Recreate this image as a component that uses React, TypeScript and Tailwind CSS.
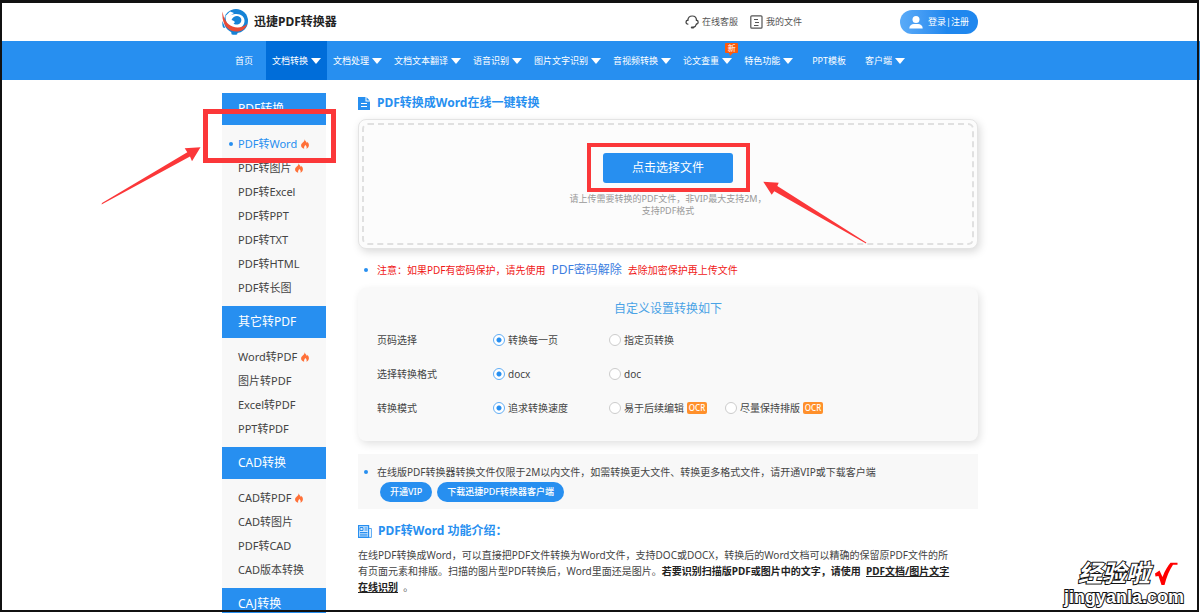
import type { ReactNode } from 'react'

interface NavItem {
  label: string
  menu?: boolean
  active?: boolean
  isNew?: boolean
}

interface SideItem {
  label: string
  hot?: boolean
  active?: boolean
}

interface SideGroup {
  title: string
  items: SideItem[]
}

interface Option {
  label: string
  ocr?: boolean
}

interface SettingRow {
  name: string
  label: string
  options: Option[]
}

const NAV: NavItem[] = [
  { label: '首页' },
  { label: '文档转换', menu: true, active: true },
  { label: '文档处理', menu: true },
  { label: '文档文本翻译', menu: true },
  { label: '语音识别', menu: true },
  { label: '图片文字识别', menu: true },
  { label: '音视频转换', menu: true },
  { label: '论文查重', menu: true, isNew: true },
  { label: '特色功能', menu: true },
  { label: 'PPT模板' },
  { label: '客户端', menu: true },
]

const GROUPS: SideGroup[] = [
  {
    title: 'PDF转换',
    items: [
      { label: 'PDF转Word', hot: true, active: true },
      { label: 'PDF转图片', hot: true },
      { label: 'PDF转Excel' },
      { label: 'PDF转PPT' },
      { label: 'PDF转TXT' },
      { label: 'PDF转HTML' },
      { label: 'PDF转长图' },
    ],
  },
  {
    title: '其它转PDF',
    items: [
      { label: 'Word转PDF', hot: true },
      { label: '图片转PDF' },
      { label: 'Excel转PDF' },
      { label: 'PPT转PDF' },
    ],
  },
  {
    title: 'CAD转换',
    items: [
      { label: 'CAD转PDF', hot: true },
      { label: 'CAD转图片' },
      { label: 'PDF转CAD' },
      { label: 'CAD版本转换' },
    ],
  },
  { title: 'CAJ转换', items: [] },
]

const SETTINGS: SettingRow[] = [
  { name: 'pages', label: '页码选择', options: [{ label: '转换每一页' }, { label: '指定页转换' }] },
  { name: 'format', label: '选择转换格式', options: [{ label: 'docx' }, { label: 'doc' }] },
  {
    name: 'mode',
    label: '转换模式',
    options: [
      { label: '追求转换速度' },
      { label: '易于后续编辑', ocr: true },
      { label: '尽量保持排版', ocr: true },
    ],
  },
]

function Logo() {
  return (
    <svg viewBox="0 0 26 26" className="size-[26px]" aria-hidden="true">
      <path d="M9 19h8.500l-2.500 6.500c-2.200.5-4.200.3-5.500-.3z" fill="#1583d6" />
      <circle cx="14" cy="12" r="12" fill="#1583d6" />
      <path d="M3.500 7C6 8 8.500 5.500 13 5c5.500-.6 10 2.500 9.500 7.500-.5 5-5 7.800-10.500 7.500C6 19.500 3.500 13 3.500 7z" fill="#fff" />
      <path d="M3.500 7C5.500 9.500 8 6.500 12 4l-4-1.500z" fill="#fff" />
      <path d="M9.500 11C11 7.500 15 6 17.800 8c2.600 2 1.700 5.800-.8 7-2 1-4.500.6-5.500-.5 1-.4 1.500-1.200 1-2-1-.9-2-1.300-3-1.500z" fill="#1583d6" />
      <path d="M.6 2.500c.8 7 4.200 12.800 9.900 15 5.200 2 10.800.7 14.800-2.500-1.500 5-5.800 7.600-10.800 7.600C5.500 22.500-1 14 .6 2.500z" fill="#e94b35" />
      <path d="M.4 12l2.800 7-2.200-.5C.2 16 .2 14 .4 12z" fill="#1583d6" />
    </svg>
  )
}

function Headset() {
  return (
    <svg viewBox="0 0 14 14" className="size-[14px]" fill="none" stroke="#444" strokeLinecap="round" aria-hidden="true">
      <path d="M2.800 5.500C3 2.700 4.800 1 7.200 1s4.300 1.800 4.300 4.500" strokeWidth="1.200" />
      <path d="M2.800 5.200C.4 5.600.4 8.800 2.800 9.200M11.400 5.200c2.400.4 2.300 3.500 0 4" strokeWidth="1.300" />
      <path d="M11.400 9.200c-.4 1.800-1.400 2.800-3 3.100" strokeWidth="1.200" />
      <path d="M6.800 12.400h1.400" strokeWidth="2" />
    </svg>
  )
}

function FileList() {
  return (
    <svg viewBox="0 0 13 14" className="h-[14px] w-[13px]" fill="none" stroke="#555" aria-hidden="true">
      <rect x=".8" y=".8" width="11.200" height="12.400" rx="1" strokeWidth="1.200" />
      <path d="M4 4.500h4M5 7.500h4M4 10.500h4.500" />
    </svg>
  )
}

function Flame() {
  return (
    <svg viewBox="0 0 8 10" className="h-[10px] w-2" aria-hidden="true">
      <path
        d="M3.800.3c.2 1.800 1.600 2.300 2.100 3.700.4-.3.500-.7.500-1.200C7.500 4 8 5.300 7.900 6.600 7.800 8.200 6.800 9.400 5.300 9.700c.7-1 .5-2.300-.9-3.700-.9 1.100-1.700 2.300-1.200 3.700C1.300 9.300.1 8 .1 6.400c0-2.500 3.300-3 3.700-6.100z"
        fill="#ff7038"
      />
    </svg>
  )
}

function Caret() {
  return (
    <svg viewBox="0 0 10 6" className="h-[6px] w-[10px]" aria-hidden="true">
      <path d="M0 0h10L5 6z" fill="#fff" />
    </svg>
  )
}

function Bullet() {
  return <span className="size-1 shrink-0 rounded-full bg-[#278ff0]" />
}

function Header() {
  return (
    <header className="pt-[3px]">
      <div className="mx-auto flex h-[38px] max-w-[756px] items-center">
        <a href="#" className="flex items-center gap-[6px] text-[12px] font-bold text-[#222]">
          <Logo />
          迅捷PDF转换器
        </a>
        <div className="ml-auto flex items-center text-[9px] text-[#555]">
          <a href="#" className="flex items-center gap-[3px]">
            <Headset />
            在线客服
          </a>
          <a href="#" className="ml-3 flex items-center gap-[3px]">
            <FileList />
            我的文件
          </a>
          <button
            type="button"
            className="ml-[98px] flex h-6 w-[78px] items-center justify-center gap-[5px] rounded-full bg-linear-to-r from-[#5aabf8] to-[#1f87ee] to-60% text-white"
          >
            <svg viewBox="0 0 14 13" className="h-[13px] w-[14px]" fill="#fff" aria-hidden="true">
              <circle cx="7" cy="3.500" r="3.500" />
              <path d="M.3 12.500c0-3 2.200-4.500 4.500-4.500h4.400c2.300 0 4.500 1.500 4.500 4.500z" />
            </svg>
            <span>登录|注册</span>
          </button>
        </div>
      </div>
    </header>
  )
}

function Nav() {
  return (
    <nav className="bg-[#278ff0] text-[9px] text-white">
      <div className="mx-auto flex h-[39px] max-w-[756px]">
        {NAV.map(item => (
          <a
            key={item.label}
            href="#"
            className={`relative flex shrink-0 items-center gap-[3px] ${item.menu ? 'px-[6px]' : 'px-[13px]'} ${item.active ? 'bg-[#006dd9]' : ''}`}
          >
            {item.label}
            {item.menu && <Caret />}
            {item.isNew && (
              <span className="absolute top-[2px] right-0 flex h-[10px] w-[13px] items-center justify-center rounded-[1px] bg-[#ff5a0a] text-[8px] leading-none">
                新
                <svg viewBox="0 0 4 3" className="absolute top-full left-1 h-[3px] w-1" aria-hidden="true">
                  <path d="M0 0h4L1 3z" fill="#ff5a0a" />
                </svg>
              </span>
            )}
          </a>
        ))}
      </div>
    </nav>
  )
}

function Sidebar() {
  return (
    <aside className="relative w-[104px] shrink-0 bg-[#f8f8f8]">
      {GROUPS.map(group => (
        <section key={group.title}>
          <h2 className="flex h-8 items-center bg-[#278ff0] pl-4 text-[12px] text-white">{group.title}</h2>
          <ul className="pt-[7px] pb-[6px]">
            {group.items.map(item => (
              <li key={item.label} className="h-6">
                <a
                  href="#"
                  className={`relative flex h-6 items-center gap-1 pl-4 text-[11px] ${item.active ? 'text-[#278ff0]' : 'text-[#444]'}`}
                >
                  {item.active && <span className="absolute left-[7px] size-1 rounded-full bg-[#278ff0]" />}
                  {item.label}
                  {item.hot && <Flame />}
                </a>
              </li>
            ))}
          </ul>
        </section>
      ))}

      {/* Tutorial marks */}
      <div className="absolute top-4 -left-[19px] h-[54px] w-[133px] border-[5px] border-[#fb3739]" />
      <svg viewBox="0 0 101 60" className="absolute top-[53px] -left-[121px] h-[60px] w-[101px]" aria-hidden="true">
        <path d="M.5 58.500L1 57 86.300 6.300 83.700 2.300 99.500 1.300 91 15.300 89 10.500z" fill="#fb3739" />
      </svg>
    </aside>
  )
}

function Upload() {
  return (
    <div className="rounded-lg border border-[#e4e4e4] bg-[#fcfcfc] p-[3px] shadow-[2px_3px_8px_rgba(0,0,0,0.15)]">
      <div className="flex h-[122px] flex-col items-center rounded-md border-2 border-dashed border-[#e0e0e0] pt-7">
        <div className="relative">
          <button type="button" className="h-[30px] w-[130px] rounded-[3px] bg-[#278ff0] text-[12px] text-white">
            点击选择文件
          </button>
          <div className="absolute -top-[10px] -right-[17px] -bottom-[9px] -left-4 border-4 border-[#fb3739]" />
          <svg viewBox="0 0 104 63" className="absolute top-7 left-[160px] h-[63px] w-[104px]" aria-hidden="true">
            <path d="M.3.700L15.700 1.700 14.300 5 103.300 61.500 103 62.500 11.300 10.300 8.700 13.700z" fill="#fb3739" />
          </svg>
        </div>
        <p className="mt-[10px] text-center text-[9px] leading-[12px] text-[#999]">
          请上传需要转换的PDF文件，非VIP最大支持2M，
          <br />
          支持PDF格式
        </p>
      </div>
    </div>
  )
}

function Settings() {
  return (
    <form className="rounded-lg bg-[#f9f9f9] px-[19px] pt-3 pb-4 shadow-[2px_3px_8px_rgba(0,0,0,0.12)]">
      <h2 className="text-center text-[12px] leading-[18px] text-[#4aa3e6]">自定义设置转换如下</h2>
      <div className="pt-[5px]">
        {SETTINGS.map(row => (
          <fieldset key={row.name} className="flex h-[34px] items-center text-[10px] text-[#444]">
            <legend className="float-left w-[116px]">{row.label}</legend>
            {row.options.map((option, i) => (
              <label key={option.label} className="flex w-[116px] items-center gap-[3px] whitespace-nowrap">
                <input
                  type="radio"
                  name={row.name}
                  defaultChecked={i === 0}
                  className="size-3 shrink-0 appearance-none rounded-full border border-[#ccc] bg-white checked:border-[#62aef5] checked:bg-[radial-gradient(circle,#278ff0_0_2px,#fff_3px)]"
                />
                {option.label}
                {option.ocr && (
                  <span className="flex h-3 w-5 items-center justify-center rounded-[2px] bg-[#ff902b] text-[8px] font-medium text-white">
                    OCR
                  </span>
                )}
              </label>
            ))}
          </fieldset>
        ))}
      </div>
    </form>
  )
}

function Pill({ children }: { children: ReactNode }) {
  return (
    <button type="button" className="h-5 rounded-full bg-[#278ff0] px-[10px] text-[9px] font-medium text-white">
      {children}
    </button>
  )
}

function Main() {
  return (
    <main className="min-w-0 flex-1">
      <h1 className="flex h-5 items-center gap-[7px] text-[12px] font-bold text-[#278ff0]">
        <svg viewBox="0 0 12 13" className="h-[13px] w-3" aria-hidden="true">
          <path d="M0 0h7.500v4.500H12V13H0z" fill="#278ff0" />
          <path d="M8.500.3L11.700 3.500H8.500z" fill="#278ff0" />
          <path d="M3 6.500h6M3 9.500h6" stroke="#fff" />
        </svg>
        PDF转换成Word在线一键转换
      </h1>

      <div className="mt-[6px]">
        <Upload />
      </div>

      <p className="mt-[11px] flex h-5 items-center pl-[6px] text-[10px] text-[#f01818]">
        <Bullet />
        <span className="ml-[9px]">注意：如果PDF有密码保护，请先使用</span>
        <a href="#" className="mx-[6px] text-[12px] text-[#3b7de0]">
          PDF密码解除
        </a>
        <span>去除加密保护再上传文件</span>
      </p>

      <div className="mt-2">
        <Settings />
      </div>

      <div className="mt-[13px] bg-[#f8f8f8] pt-2 pb-[7px]">
        <p className="flex h-5 items-center pl-[6px] text-[10px] text-[#444]">
          <Bullet />
          <span className="ml-[9px]">
            在线版PDF转换器转换文件仅限于2M以内文件，如需转换更大文件、转换更多格式文件，请开通VIP或下载客户端
          </span>
        </p>
        <div className="flex gap-[5px] pl-[22px]">
          <Pill>开通VIP</Pill>
          <Pill>下载迅捷PDF转换器客户端</Pill>
        </div>
      </div>

      <h2 className="mt-3 flex h-5 items-center gap-[6px] text-[12px] font-bold text-[#278ff0]">
        <svg viewBox="0 0 14 13" className="h-[13px] w-[14px]" fill="none" stroke="#278ff0" aria-hidden="true">
          <path d="M.6.6h10v11.800H.6z" fill="#d6eaff" strokeWidth="1.200" />
          <path d="M10.600 3.500h2.800v8.900h-2.800" strokeWidth=".8" />
          <path d="M2 2.500h3v3H2zM6.500 3h3M6.500 5h3" />
          <path d="M2 7.500h7.500M2 9.200h7.500M2 10.900h7.500" />
        </svg>
        PDF转Word 功能介绍：
      </h2>
      <p className="mt-[6px] text-[10px] leading-4 whitespace-nowrap text-[#444]">
        在线PDF转换成Word，可以直接把PDF文件转换为Word文件，支持DOC或DOCX，转换后的Word文档可以精确的保留原PDF文件的所
        <br />
        有页面元素和排版。扫描的图片型PDF转换后，Word里面还是图片。
        <strong className="text-[#222]">
          若要识别扫描版PDF或图片中的文字，请使用&nbsp;&nbsp;
          <a href="#" className="underline">
            PDF文档/图片文字
            <br />
            在线识别
          </a>
        </strong>
        &nbsp;&nbsp;。
      </p>
    </main>
  )
}

export default function App() {
  return (
    <div className="relative h-screen overflow-hidden bg-white font-['Noto_Sans','Noto_Sans_CJK_SC',sans-serif]">
      <Header />
      <Nav />
      <div className="mx-auto flex max-w-[756px] gap-8 pt-[13px]">
        <Sidebar />
        <Main />
      </div>

      {/* Window frame */}
      <div className="pointer-events-none absolute inset-0 right-px bottom-px border-2 border-t-[3px] border-[#111]" />

      {/* Site mark */}
      <div className="absolute right-4 bottom-[6px] font-['Liberation_Sans','Noto_Sans_CJK_SC',sans-serif] font-bold text-white [paint-order:stroke_fill] [-webkit-text-stroke:2px_#111]">
        <div className="flex items-center justify-end gap-1 pr-[6px] text-[24px] leading-[26px] italic">
          经验啦
          <svg viewBox="0 0 24 24" className="size-6" aria-hidden="true">
            <path d="M1 11.500l4.500-3 3 6.500C11 8.500 14 3.500 16.500.8h7v2h-4.500C15.500 8 12.500 15 10.500 23H7.500L4.500 14 1.500 14.500z" fill="#f00" />
          </svg>
        </div>
        <div className="text-[18px] leading-5">jingyanla.com</div>
      </div>
    </div>
  )
}
